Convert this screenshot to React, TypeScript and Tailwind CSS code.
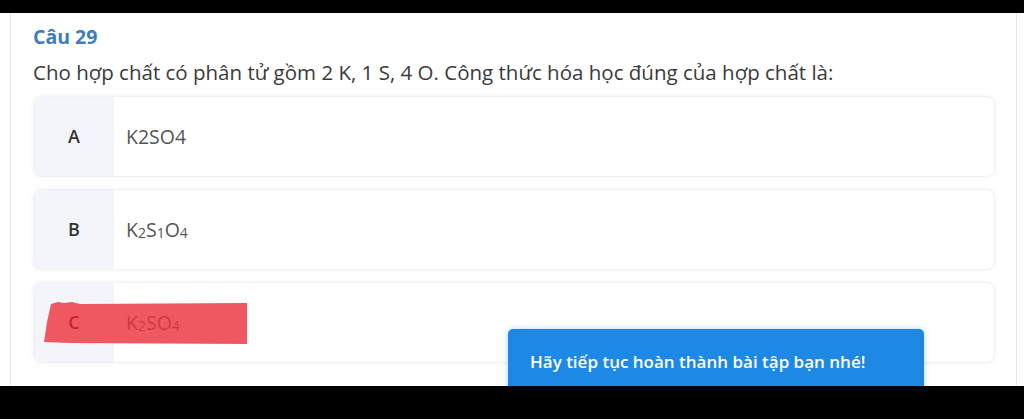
import React from "react";

const font = { fontFamily: '"Open Sans", "Noto Sans", sans-serif' };

function Sub({ children }: { children: React.ReactNode }) {
  return <sub className="text-[14px] align-[-5px] leading-none">{children}</sub>;
}

function Option({
  label,
  children,
  red,
}: {
  label: string;
  children: React.ReactNode;
  red?: boolean;
}) {
  return (
    <div className="flex h-[81px] rounded-lg bg-white shadow-[0_0_4px_rgba(0,0,0,0.05)] border border-[#f1f2f4]">
      <div className="w-[80px] flex items-center justify-center bg-[#f3f5fa] rounded-l-lg">
        <span
          className={`relative z-10 text-[18px] font-semibold ${red ? "text-[#c8242c]" : "text-[#333]"}`}
        >
          {label}
        </span>
      </div>
      <div
        className={`relative z-10 flex items-center pl-[12px] text-[19.5px] ${red ? "text-[#d03a43]" : "text-[#555]"}`}
      >
        {children}
      </div>
    </div>
  );
}

export default function App() {
  return (
    <div className="w-[1024px] h-[419px] bg-black flex flex-col" style={font}>
      <div className="h-[13px] bg-black" />
      <div className="relative h-[373px] bg-white overflow-hidden">
        <div className="ml-[10px] w-[1007px] h-full border-l border-r border-[#e6e7e9] pl-[22px] pr-[21px] pt-[11px]">
          <div className="text-[19.5px] leading-[26px] font-bold text-[#3f7cbc]">Câu 29</div>
          <div className="mt-[9px] text-[20.5px] leading-[26px] text-[#3a3a3a]">
            Cho hợp chất có phân tử gồm 2 K, 1 S, 4 O. Công thức hóa học đúng của hợp chất là:
          </div>
          <div className="mt-[11px] flex flex-col gap-[12px]">
            <Option label="A">K2SO4</Option>
            <Option label="B">
              K<Sub>2</Sub>S<Sub>1</Sub>O<Sub>4</Sub>
            </Option>
            <Option label="C" red>
              K<Sub>2</Sub>SO<Sub>4</Sub>
            </Option>
          </div>
        </div>
        <svg
          className="absolute left-0 top-0 pointer-events-none"
          width="1024"
          height="373"
          viewBox="0 13 1024 373"
        >
          <polygon
            points="51,304 58,302 64,303 72,302 80,304 247,303 247,344 70,343 44,342 47,322"
            fill="#ef5860"
          />
        </svg>
        <div className="absolute left-[508px] top-[316px] w-[416px] h-[80px] bg-[#1e88e5] rounded-[5px] shadow-[0_0_6px_rgba(30,136,229,0.35)] pl-[22px] pt-[20px] text-white text-[17px] font-semibold z-20">
          Hãy tiếp tục hoàn thành bài tập bạn nhé!
        </div>
      </div>
      <div className="flex-1 bg-black" />
    </div>
  );
}
